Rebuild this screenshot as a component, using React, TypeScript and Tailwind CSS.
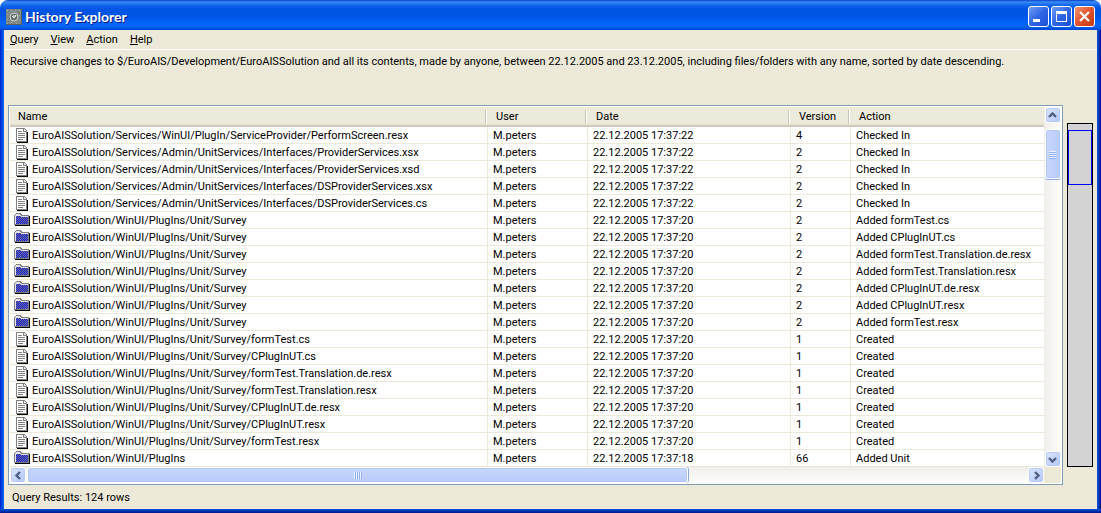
import { useId, useState } from 'react';
import clsx from 'clsx';

interface Change {
    icon: 'file' | 'folder';
    name: string;
    date: string;
    version: number;
    action: string;
}

const SERVICES = 'EuroAISSolution/Services';
const PLUGINS = 'EuroAISSolution/WinUI/PlugIns';
const SURVEY = `${PLUGINS}/Unit/Survey`;

const D22 = '22.12.2005 17:37:22';
const D20 = '22.12.2005 17:37:20';
const D18 = '22.12.2005 17:37:18';

const changes: Change[] = [
    { icon: 'file', name: `${SERVICES}/WinUI/PlugIn/ServiceProvider/PerformScreen.resx`, date: D22, version: 4, action: 'Checked In' },
    { icon: 'file', name: `${SERVICES}/Admin/UnitServices/Interfaces/ProviderServices.xsx`, date: D22, version: 2, action: 'Checked In' },
    { icon: 'file', name: `${SERVICES}/Admin/UnitServices/Interfaces/ProviderServices.xsd`, date: D22, version: 2, action: 'Checked In' },
    { icon: 'file', name: `${SERVICES}/Admin/UnitServices/Interfaces/DSProviderServices.xsx`, date: D22, version: 2, action: 'Checked In' },
    { icon: 'file', name: `${SERVICES}/Admin/UnitServices/Interfaces/DSProviderServices.cs`, date: D22, version: 2, action: 'Checked In' },
    { icon: 'folder', name: SURVEY, date: D20, version: 2, action: 'Added formTest.cs' },
    { icon: 'folder', name: SURVEY, date: D20, version: 2, action: 'Added CPlugInUT.cs' },
    { icon: 'folder', name: SURVEY, date: D20, version: 2, action: 'Added formTest.Translation.de.resx' },
    { icon: 'folder', name: SURVEY, date: D20, version: 2, action: 'Added formTest.Translation.resx' },
    { icon: 'folder', name: SURVEY, date: D20, version: 2, action: 'Added CPlugInUT.de.resx' },
    { icon: 'folder', name: SURVEY, date: D20, version: 2, action: 'Added CPlugInUT.resx' },
    { icon: 'folder', name: SURVEY, date: D20, version: 2, action: 'Added formTest.resx' },
    { icon: 'file', name: `${SURVEY}/formTest.cs`, date: D20, version: 1, action: 'Created' },
    { icon: 'file', name: `${SURVEY}/CPlugInUT.cs`, date: D20, version: 1, action: 'Created' },
    { icon: 'file', name: `${SURVEY}/formTest.Translation.de.resx`, date: D20, version: 1, action: 'Created' },
    { icon: 'file', name: `${SURVEY}/formTest.Translation.resx`, date: D20, version: 1, action: 'Created' },
    { icon: 'file', name: `${SURVEY}/CPlugInUT.de.resx`, date: D20, version: 1, action: 'Created' },
    { icon: 'file', name: `${SURVEY}/CPlugInUT.resx`, date: D20, version: 1, action: 'Created' },
    { icon: 'file', name: `${SURVEY}/formTest.resx`, date: D20, version: 1, action: 'Created' },
    { icon: 'folder', name: PLUGINS, date: D18, version: 66, action: 'Added Unit' },
];

const menus = ['Query', 'View', 'Action', 'Help'];
const columns = ['Name', 'User', 'Date', 'Version', 'Action'];

function FileIcon() {
    return (
        <svg width="16" height="16" viewBox="0 0 16 16" shapeRendering="crispEdges" aria-hidden="true">
            <path d="M3 16h11V5h-1v10H3z" fill="#000" />
            <path d="M2 1h8l3 3v11H2z" fill="#808080" />
            <path d="M3 2h6v3h3v9H3z" fill="#fff" />
            <path d="M10 2h1v1h1v1h-2z" fill="#e8e8e8" />
            <path d="M4 4h4v1H4zM4 6h7v1H4zM4 8h7v1H4zM4 10h7v1H4zM4 12h5v1H4z" fill="#808080" />
        </svg>
    );
}

// Filled with a one pixel checkerboard of blue and grey
function FolderIcon() {
    const id = useId();
    return (
        <svg width="16" height="16" viewBox="0 0 16 16" shapeRendering="crispEdges" aria-hidden="true">
            <defs>
                <pattern id={id} width="2" height="2" patternUnits="userSpaceOnUse">
                    <rect width="2" height="2" fill="#0000ff" />
                    <path d="M0 0h1v1H0zM1 1h1v1H1z" fill="#808080" />
                </pattern>
            </defs>
            <path d="M1 14h15V4h-1v9H1z" fill="#000" />
            <path d="M0 3h1V2h1V1h5v1h1v1h7v10H0z" fill="#808080" />
            <path d="M1 4h13v8H1z" fill={`url(#${id})`} />
            <path d="M2 2h4v1H2zM1 3h6v1H1zM7 4h7v1H7zM1 4h1v8H1z" fill="#e4e4f0" />
        </svg>
    );
}

function AppIcon() {
    return (
        <svg width="16" height="16" viewBox="0 0 16 16" aria-hidden="true">
            <rect width="16" height="16" fill="#7d8783" />
            <path d="M0 15.500h16M15.500 0v16" stroke="#59625f" />
            <path d="M1 1h1v1H1zM5 1h1v1H5zM9 1h1v1H9zM13 1h1v1h-1zM1 5h1v1H1zM13 6h1v1h-1zM1 10h1v1H1zM13 11h1v1h-1zM1 14h1v1H1zM5 13h1v1H5zM10 14h1v1h-1z" fill="#a9b3af" />
            <circle cx="8" cy="8" r="4" fill="#69726f" stroke="#c9d2ce" />
            <path d="M6 7l2 2 2-3M7 7h3" stroke="#eef3f1" fill="none" />
        </svg>
    );
}

function Chevron({ dir }: { dir: 'up' | 'down' | 'left' | 'right' }) {
    const d = {
        up: 'M1 6l3.500-3.500L8 6',
        down: 'M1 3l3.500 3.500L8 3',
        left: 'M6 1L2.500 4.500 6 8',
        right: 'M3 1l3.500 3.500L3 8',
    }[dir];
    return (
        <svg width="9" height="9" viewBox="0 0 9 9" aria-hidden="true">
            <path d={d} fill="none" stroke="#4d6185" strokeWidth="2.400" />
        </svg>
    );
}

function ScrollButton({ dir }: { dir: 'up' | 'down' | 'left' | 'right' }) {
    return (
        <button
            type="button"
            aria-label={`Scroll ${dir}`}
            className="flex h-4 w-4 shrink-0 items-center justify-center rounded-[3px] border border-white bg-linear-to-br from-[#dbe6ff] to-[#b4c8f6] shadow-[inset_0_0_0_1px_#b8caf5]"
        >
            <Chevron dir={dir} />
        </button>
    );
}

export default function App() {
    const [selected, setSelected] = useState<number | null>(null);

    return (
        <div className="flex flex-col bg-white font-['Roboto','Liberation_Sans',sans-serif] text-[11px] leading-4 text-black">
            {/* Title bar */}
            <header className="flex h-[30px] items-center gap-[3px] rounded-t-lg bg-[linear-gradient(to_bottom,#0b3fc6_0px,#3a8cf8_2px,#1467ec_5px,#0055e5_9px,#0055e5_16px,#0266fc_24px,#0062f2_27px,#0144cf_30px)] pt-[3px] pr-[6px] pl-[6px]">
                <AppIcon />
                <h1 className="flex-1 truncate font-['Lato',sans-serif] text-[14px] font-bold text-white [text-shadow:1px_1px_0_#0a1883]">
                    History Explorer
                </h1>
                <div className="flex gap-[2px]">
                    <button type="button" aria-label="Minimize" className="h-[21px] w-[21px] rounded-[3px] border border-white bg-linear-to-br from-[#6f9bf3] via-[#2f66e4] to-[#1c4fd6]">
                        <svg width="19" height="19" viewBox="0 0 19 19" shapeRendering="crispEdges" aria-hidden="true">
                            <path d="M4 12h7v3H4z" fill="#fff" />
                        </svg>
                    </button>
                    <button type="button" aria-label="Maximize" className="h-[21px] w-[21px] rounded-[3px] border border-white bg-linear-to-br from-[#6f9bf3] via-[#2f66e4] to-[#1c4fd6]">
                        <svg width="19" height="19" viewBox="0 0 19 19" shapeRendering="crispEdges" aria-hidden="true">
                            <path d="M4 4h11v11H4zM5 7v7h9V7z" fill="#fff" fillRule="evenodd" />
                        </svg>
                    </button>
                    <button type="button" aria-label="Close" className="h-[21px] w-[21px] rounded-[3px] border border-white bg-linear-to-br from-[#f0936f] via-[#e1512b] to-[#c43a12]">
                        <svg width="19" height="19" viewBox="0 0 19 19" aria-hidden="true">
                            <path d="M5 5l9 9M14 5l-9 9" stroke="#fff" strokeWidth="2.200" />
                        </svg>
                    </button>
                </div>
            </header>

            <div className="flex">
                <div className="w-1 shrink-0 bg-linear-to-r from-[#0019cf] to-[#166aee]" />

                <div className="min-w-0 flex-1 bg-[#ece9d8]">
                    <nav className="flex h-5 items-center gap-3 border-b border-white px-[6px]">
                        {menus.map((m) => (
                            <button key={m} type="button" className="first-letter:underline">
                                {m}
                            </button>
                        ))}
                    </nav>

                    <p className="h-[55px] px-[6px] pt-1">
                        Recursive changes to $/EuroAIS/Development/EuroAISSolution and all its contents, made by anyone, between
                        22.12.2005 and 23.12.2005, including files/folders with any name, sorted by date descending.
                    </p>

                    <main className="flex gap-1 px-1">
                        <div className="min-w-0 flex-1 border border-[#7f9db9] bg-white p-px">
                            <div className="flex">
                                <table className="min-w-0 flex-1 table-fixed border-separate border-spacing-0 text-left">
                                    <colgroup>
                                        <col className="w-[478px]" />
                                        <col className="w-[100px]" />
                                        <col className="w-[203px]" />
                                        <col className="w-[60px]" />
                                        <col />
                                    </colgroup>
                                    <thead>
                                        <tr>
                                            {columns.map((c, i) => (
                                                <th
                                                    key={c}
                                                    scope="col"
                                                    className="h-5 bg-[linear-gradient(to_bottom,#ebeadb_17px,#e2decd_17px,#e2decd_18px,#d6d2c2_18px,#d6d2c2_19px,#cbc7b8_19px)] p-0 font-normal"
                                                >
                                                    <div
                                                        className={clsx(
                                                            'mr-[2px] h-[14px] pl-2 leading-[14px]',
                                                            i < columns.length - 1 && 'border-r border-[#c7c5b2] shadow-[1px_0_0_#fff]'
                                                        )}
                                                    >
                                                        {c}
                                                    </div>
                                                </th>
                                            ))}
                                        </tr>
                                    </thead>
                                    <tbody>
                                        {changes.map((row, i) => (
                                            <tr
                                                key={i}
                                                onClick={() => setSelected(i)}
                                                className={clsx(
                                                    selected === i && 'bg-[#316ac5] text-white',
                                                    '[&>td]:truncate [&>td]:border-b [&>td]:border-[#ece9d8] [&>td]:p-0 [&>td]:leading-[18px] [&>td:not(:last-child)]:border-r'
                                                )}
                                            >
                                                <td>
                                                    <div className="flex h-4 gap-[2px] pl-1">
                                                        {row.icon === 'file' ? <FileIcon /> : <FolderIcon />}
                                                        {row.name}
                                                    </div>
                                                </td>
                                                <td>
                                                    <div className="h-4 pl-[5px]">M.peters</div>
                                                </td>
                                                <td>
                                                    <div className="h-4 pl-[5px]">{row.date}</div>
                                                </td>
                                                <td>
                                                    <div className="h-4 pl-[5px]">{row.version}</div>
                                                </td>
                                                <td>
                                                    <div className="h-4 pl-[5px]">{row.action}</div>
                                                </td>
                                            </tr>
                                        ))}
                                    </tbody>
                                </table>

                                {/* Vertical scrollbar */}
                                <div className="flex w-[17px] flex-col items-center bg-linear-to-r from-[#f0eeea] to-[#fefefb]">
                                    <ScrollButton dir="up" />
                                    <div className="mt-[6px] flex h-[50px] w-4 flex-col items-center justify-center gap-px rounded-[3px] border border-white bg-linear-to-r from-[#c9d7fd] to-[#b8cbf9] shadow-[inset_0_0_0_1px_#b3c7f5,0_1px_0_#8fa9dd]">
                                        {[0, 1, 2, 3].map((n) => (
                                            <span key={n} className="h-px w-[7px] bg-[#eef4fe] shadow-[0_1px_0_#8cb0f8]" />
                                        ))}
                                    </div>
                                    <div className="flex-1" />
                                    <ScrollButton dir="down" />
                                </div>
                            </div>

                            {/* Horizontal scrollbar */}
                            <div className="flex">
                                <div className="flex flex-1 bg-linear-to-b from-[#f0eeea] to-[#fefefb]">
                                    <ScrollButton dir="left" />
                                    <div className="flex-1 pl-px">
                                        <div className="flex h-4 w-[66%] items-center justify-center gap-px rounded-[3px] border border-white bg-linear-to-b from-[#c9d7fd] to-[#b8cbf9] shadow-[inset_0_0_0_1px_#b3c7f5,1px_0_0_#8fa9dd]">
                                            {[0, 1, 2, 3].map((n) => (
                                                <span key={n} className="h-[7px] w-px bg-[#eef4fe] shadow-[1px_0_0_#8cb0f8]" />
                                            ))}
                                        </div>
                                    </div>
                                    <ScrollButton dir="right" />
                                </div>
                                <div className="w-[17px] bg-[#ece9d8]" />
                            </div>
                        </div>

                        {/* Overview strip with the visible range */}
                        <div className="my-[18px] w-[26px] shrink-0 border border-black bg-[#d3d3d3] pt-[6px]">
                            <div className="h-[55px] border border-[#0000ff]" />
                        </div>
                    </main>

                    <footer className="h-6 px-2 pt-[5px]">Query Results: 124 rows</footer>
                </div>

                <div className="w-1 shrink-0 bg-linear-to-r from-[#0855dd] to-[#00138c]" />
            </div>
            <div className="h-1 bg-linear-to-b from-[#0855dd] to-[#00138c]" />
        </div>
    );
}
